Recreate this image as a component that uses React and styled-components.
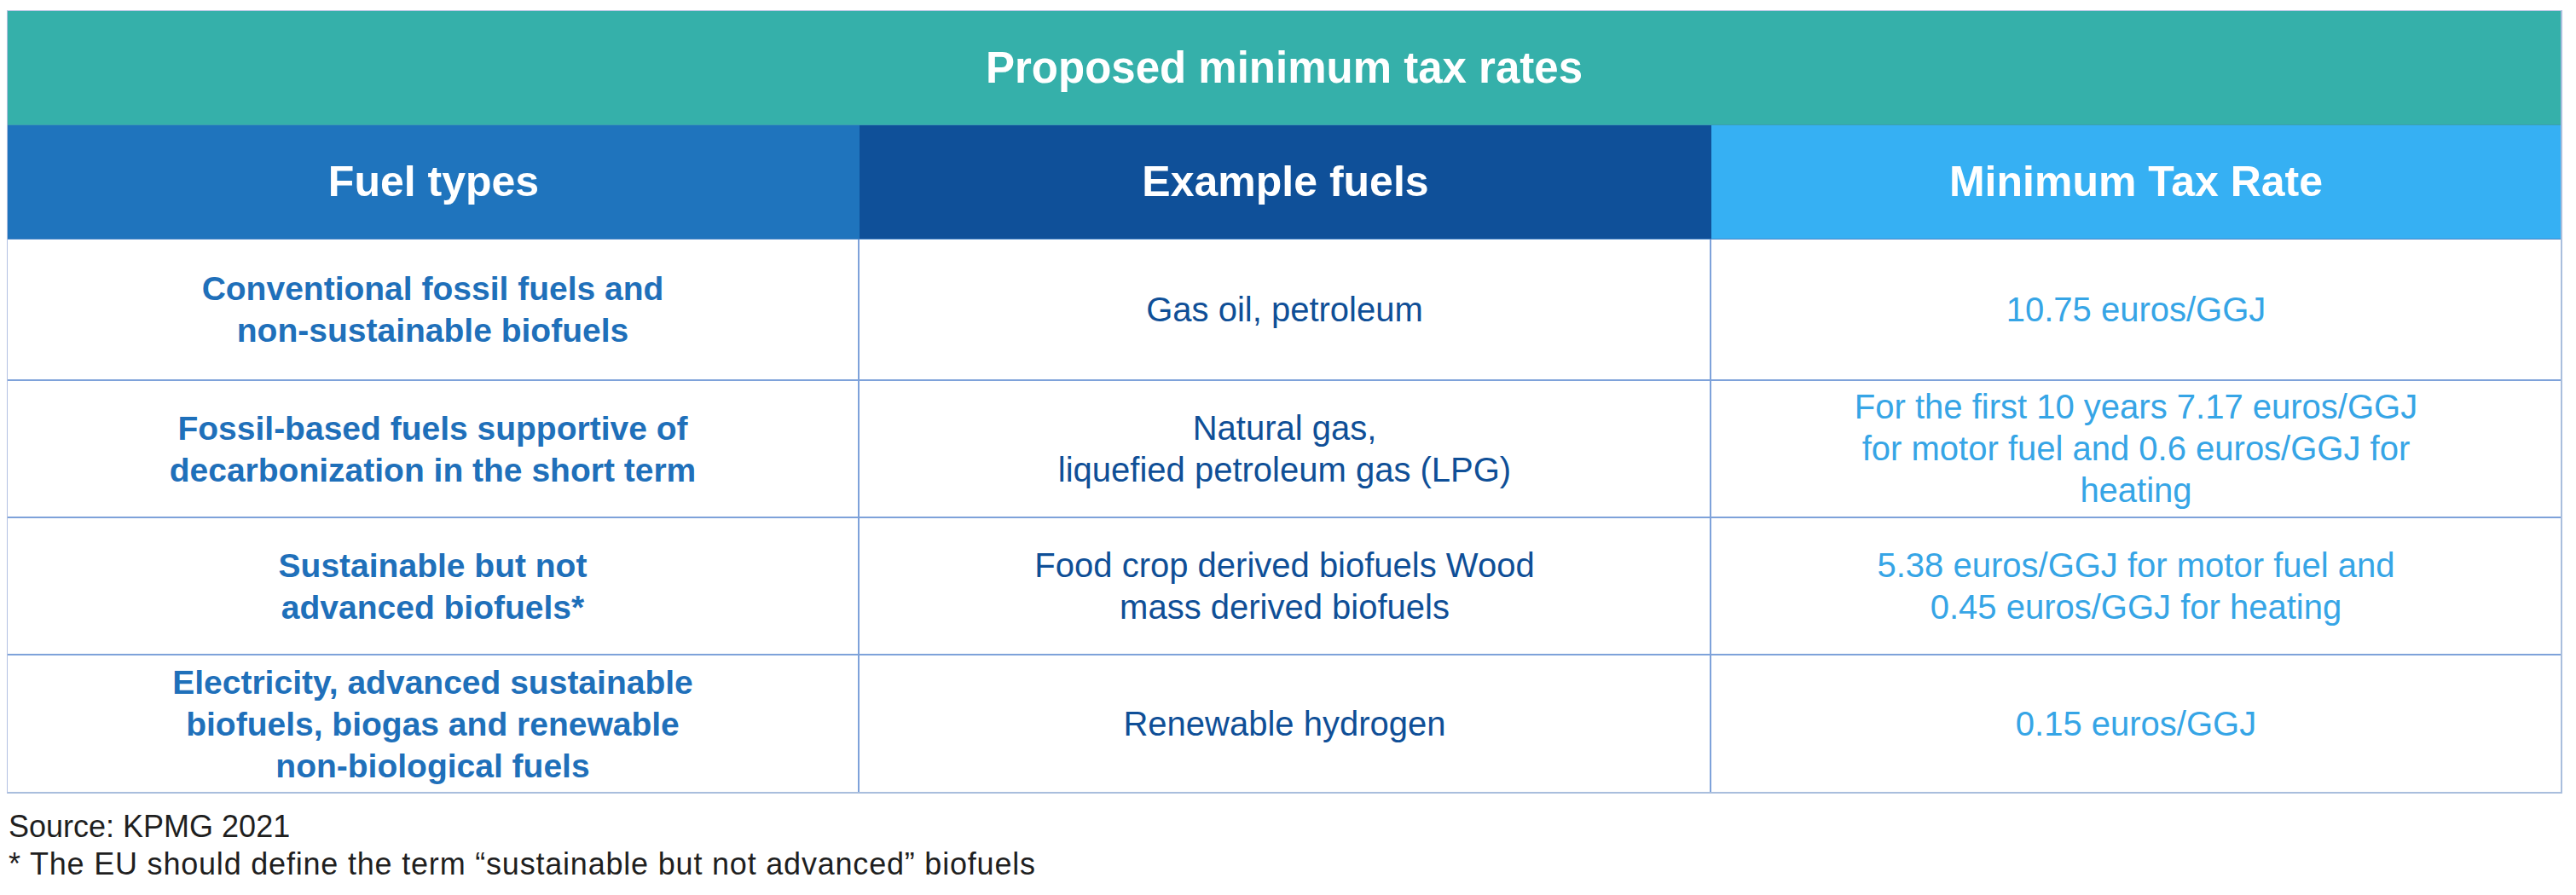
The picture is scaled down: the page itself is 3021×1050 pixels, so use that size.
import React from 'react';
import styled, { createGlobalStyle } from 'styled-components';

const GlobalStyle = createGlobalStyle`
  html, body {
    margin: 0;
    padding: 0;
    background: #ffffff;
  }
  body {
    font-family: "Liberation Sans", Arial, Helvetica, sans-serif;
  }
`;

const Page = styled.div`
  padding: 12px 16px 0 8px;
  width: 2997px;
`;

const Table = styled.div`
  width: 2997px;
  border-top: 1px solid #b3c1e2;
  border-left: 1px solid #b3c1e2;
  border-right: 2px solid #a9bedd;
  box-sizing: border-box;
`;

const TitleBar = styled.div`
  height: 134px;
  background-color: #35b0aa;
  border-bottom: 1px solid #3a9fb2;
  display: flex;
  align-items: center;
  justify-content: center;
  color: #ffffff;
  font-size: 51px;
  font-weight: 700;
  box-sizing: border-box;
`;

const HeaderRow = styled.div`
  display: grid;
  grid-template-columns: 999px 999px 1fr;
  height: 134px;
  border-bottom: 1px solid #4a86c8;
  box-sizing: border-box;
`;

const HeadCell = styled.div`
  background-color: ${(p) => p.$bg};
  display: flex;
  align-items: center;
  justify-content: center;
  color: #ffffff;
  font-size: 50px;
  font-weight: 700;
  padding-bottom: 2px;
`;

const BodyRow = styled.div`
  display: grid;
  grid-template-columns: 999px 999px 1fr;
  height: ${(p) => p.$h}px;
  border-bottom: 2px solid ${(p) => (p.$last ? '#a9bedd' : '#7ea2da')};
  box-sizing: border-box;
`;

const Cell = styled.div`
  display: flex;
  align-items: center;
  justify-content: center;
  text-align: center;
  white-space: nowrap;
  color: ${(p) => p.$color};
  font-size: ${(p) => (p.$bold ? 39 : 40)}px;
  font-weight: ${(p) => (p.$bold ? 700 : 400)};
  line-height: 49px;
  border-right: ${(p) => (p.$edge ? 'none' : '2px solid #7ea2da')};
  box-sizing: border-box;
`;

const Footer = styled.div`
  margin-top: 17px;
  color: #1f1f1f;
  font-size: 36px;
  line-height: 44px;
  padding-left: 2px;
`;

const FootNote = styled.div`
  letter-spacing: 0.8px;
`;

const columns = [
  { title: 'Fuel types', bg: '#1f74bd', color: '#1f70ba', bold: true },
  { title: 'Example fuels', bg: '#0f5099', color: '#0f4f97', bold: false },
  { title: 'Minimum Tax Rate', bg: '#36b0f3', color: '#36a5e6', bold: false },
];

const rows = [
  {
    h: 166,
    cells: [
      ['Conventional fossil fuels and', 'non-sustainable biofuels'],
      ['Gas oil, petroleum'],
      ['10.75 euros/GGJ'],
    ],
  },
  {
    h: 161,
    cells: [
      ['Fossil-based fuels supportive of', 'decarbonization in the short term'],
      ['Natural gas,', 'liquefied petroleum gas (LPG)'],
      ['For the first 10 years 7.17 euros/GGJ', 'for motor fuel and 0.6 euros/GGJ for', 'heating'],
    ],
  },
  {
    h: 161,
    cells: [
      ['Sustainable but not', 'advanced biofuels*'],
      ['Food crop derived biofuels Wood', 'mass derived biofuels'],
      ['5.38 euros/GGJ for motor fuel and', '0.45 euros/GGJ for heating'],
    ],
  },
  {
    h: 162,
    cells: [
      ['Electricity, advanced sustainable', 'biofuels, biogas and renewable', 'non-biological fuels'],
      ['Renewable hydrogen'],
      ['0.15 euros/GGJ'],
    ],
  },
];

const Lines = ({ lines }) =>
  lines.map((line, i) => (
    <React.Fragment key={i}>
      {i > 0 && <br />}
      {line}
    </React.Fragment>
  ));

const App = () => {
  return (
    <>
      <GlobalStyle />
      <Page>
        <Table>
          <TitleBar>Proposed minimum tax rates</TitleBar>
          <HeaderRow>
            {columns.map((col) => (
              <HeadCell key={col.title} $bg={col.bg}>
                {col.title}
              </HeadCell>
            ))}
          </HeaderRow>
          {rows.map((row, r) => (
            <BodyRow key={r} $h={row.h} $last={r === rows.length - 1}>
              {row.cells.map((lines, c) => (
                <Cell
                  key={c}
                  $color={columns[c].color}
                  $bold={columns[c].bold}
                  $edge={c === columns.length - 1}
                >
                  <div>
                    <Lines lines={lines} />
                  </div>
                </Cell>
              ))}
            </BodyRow>
          ))}
        </Table>
        <Footer>
          <div>Source: KPMG 2021</div>
          <FootNote>* The EU should define the term “sustainable but not advanced” biofuels</FootNote>
        </Footer>
      </Page>
    </>
  );
};

export default App;
